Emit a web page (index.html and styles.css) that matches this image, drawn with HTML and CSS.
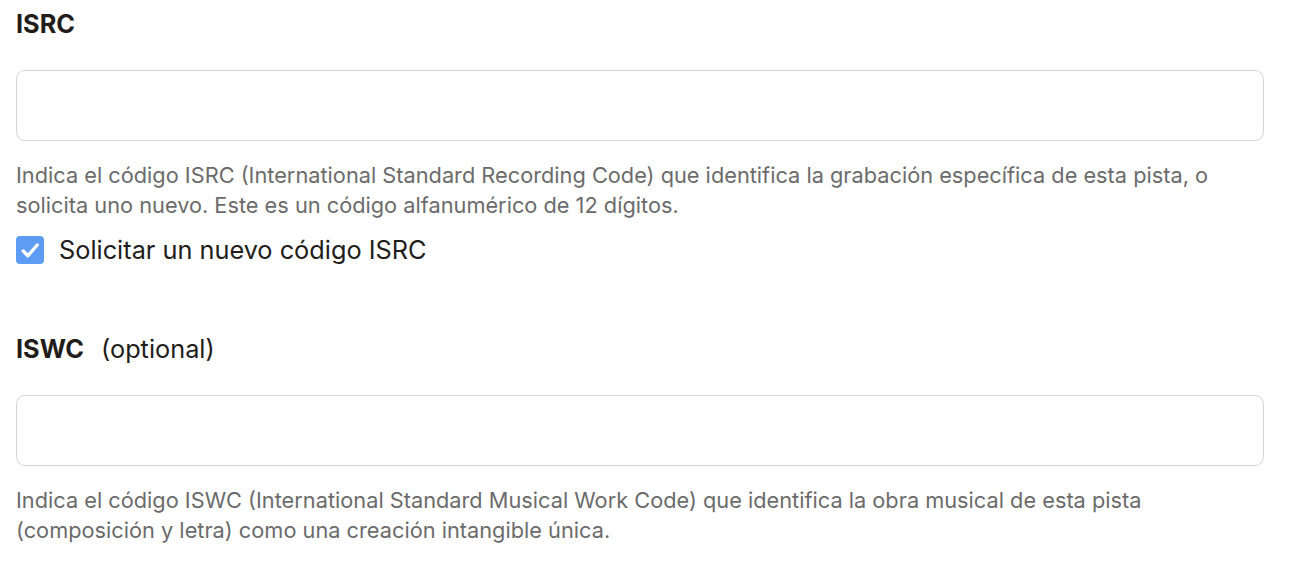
FILE: index.html
```html
<!DOCTYPE html>
<html lang="es">
<head>
<meta charset="UTF-8">
<meta name="viewport" content="width=device-width, initial-scale=1.0">
<title>Códigos de la pista</title>
<link rel="stylesheet" href="styles.css">
</head>
<body>
<div class="form">
  <div class="field">
    <label class="label" for="isrc">ISRC</label>
    <input type="text" id="isrc" class="text-input">
    <p class="help">Indica el código ISRC (International Standard Recording Code) que identifica la grabación específica de esta pista, o solicita uno nuevo. Este es un código alfanumérico de 12 dígitos.</p>
    <label class="check">
      <span class="box">
        <svg width="28" height="28" viewBox="0 0 28 28"><path d="M7.2 15 L11.8 19.8 L21.2 9" fill="none" stroke="#fff" stroke-width="3.4" stroke-linecap="round" stroke-linejoin="round"/></svg>
      </span>
      Solicitar un nuevo código ISRC
    </label>
  </div>

  <div class="field">
    <label class="label" for="iswc">ISWC <span class="optional">(optional)</span></label>
    <input type="text" id="iswc" class="text-input">
    <p class="help">Indica el código ISWC (International Standard Musical Work Code) que identifica la obra musical de esta pista (composición y letra) como una creación intangible única.</p>
  </div>
</div>
</body>
</html>
```

FILE: styles.css
```css
body, html {
  margin: 0;
  background: #fff;
}

body {
  font-family: Inter, "Noto Sans", sans-serif;
  color: #1f1f1f;
}

.form {
  width: 1248px;
  padding: 9px 16px 0;
}

.field {
  display: flex;
  flex-direction: column;
}

.field + .field {
  margin-top: 69px;
}

.label {
  font-size: 25.3px;
  font-weight: 700;
  line-height: 30px;
  color: #221d1a;
  margin-bottom: 31px;
}

.label .optional {
  font-weight: 400;
  margin-left: 11px;
}

.text-input {
  height: 71px;
  box-sizing: border-box;
  border: 1px solid #d4d4d4;
  border-radius: 9px;
  margin: 0;
  font: inherit;
  outline: none;
}

.help {
  margin: 19px 0 0;
  font-size: 21.75px;
  line-height: 30px;
  color: #6b6b6b;
}

.check {
  display: flex;
  align-items: center;
  gap: 15px;
  margin-top: 15px;
  font-size: 25.3px;
  line-height: 30px;
  color: #221d1a;
}

.box {
  width: 28px;
  height: 28px;
  border-radius: 4px;
  background: #5c9cf5;
  display: flex;
  align-items: center;
  justify-content: center;
}
```
